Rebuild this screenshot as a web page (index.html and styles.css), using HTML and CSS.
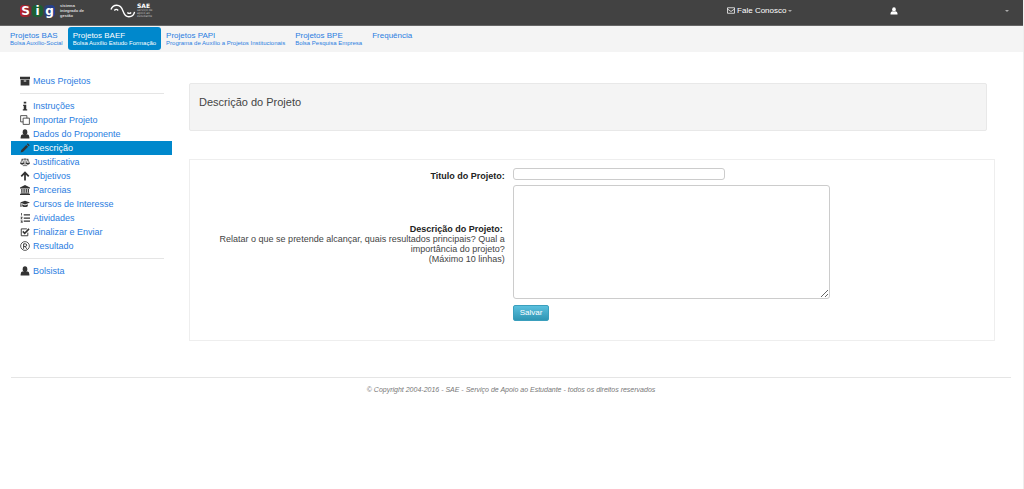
FILE: index.html
```html
<!DOCTYPE html>
<html lang="pt-BR">
<head>
<meta charset="utf-8">
<meta name="viewport" content="width=device-width, initial-scale=1">
<title>SAE - Descrição do Projeto</title>
<link rel="stylesheet" href="styles.css">
</head>
<body>
<svg class="sprite" aria-hidden="true">
  <symbol id="user" viewBox="0 0 16 16"><ellipse cx="8" cy="5" rx="3.700" ry="4.500"/><path d="M1 15v-2q0-4 4-4.500 3 2.500 6 0 4 .5 4 4.500v2z"/></symbol>
  <symbol id="archive" viewBox="0 0 16 16"><path d="M0 1h16v4H0zM1 6h14v9H1zM6 7.300v1.500h4V7.300z" fill-rule="evenodd"/></symbol>
  <symbol id="info" viewBox="0 0 16 16"><path d="M6 1h4v3H6zM5 6h5v7h1.500v2h-7v-2H6V8H5z"/></symbol>
  <symbol id="copy" viewBox="0 0 16 16"><path d="M5 5h10v10H5zM5 11H1V1h10v4" fill="none" stroke="currentColor" stroke-width="1.300"/></symbol>
  <symbol id="pencil" viewBox="0 0 16 16"><path d="M1 15l1-4 8-8 3 3-8 8zM11 2l1.500-1.500 3 3L14 5z"/></symbol>
  <symbol id="scale" viewBox="0 0 18 16"><path d="M9 1v13M5 14.500h8M3 3h12M4 3L1 10h6zM14 3l-3 7h6z" fill="none" stroke="currentColor" stroke-width="1.200"/><path d="M0 10h8q-1 3-4 3t-4-3zM10 10h8q-1 3-4 3t-4-3z"/></symbol>
  <symbol id="arrow" viewBox="0 0 16 16"><path d="M8 15V3M2 8.500l6-6 6 6" fill="none" stroke="currentColor" stroke-width="2.800"/></symbol>
  <symbol id="bank" viewBox="0 0 16 16"><path d="M8 0l8 4v1.500H0V4zM2 6.500h2V12H2zM5.500 6.500h2V12h-2zM9 6.500h2V12H9zM12.300 6.500h2V12h-2zM1 12.500h14V14H1zM0 14.500h16V16H0z"/></symbol>
  <symbol id="cap" viewBox="0 0 18 16"><path d="M9 2l9 3.500L9 9 0 5.500zM4 8.500l5 2 5-2V12q-5 3-10 0zM1 6h1.200l.8 7H.5z"/></symbol>
  <symbol id="list" viewBox="0 0 16 16"><path d="M6 2h10v2H6zM6 7h10v2H6zM6 12h10v2H6zM2 0h1.200v4H2zM1 6h3v1.200L2.500 9H4v1H1V9l1.500-1.800H1zM1 12h3v4H1v-1h1.800v-.6H1.500v-.8h1.300V13H1z"/></symbol>
  <symbol id="check" viewBox="0 0 16 16"><path d="M12.500 9v5H2V3h9" fill="none" stroke="currentColor" stroke-width="1.500"/><path d="M4.500 7l3 3.200L14.500 3" fill="none" stroke="currentColor" stroke-width="2.400"/></symbol>
  <symbol id="registered" viewBox="0 0 16 16"><circle cx="8" cy="8" r="7" fill="none" stroke="currentColor" stroke-width="1.300"/><path d="M5.800 12.500v-8h2.700q2.200 0 2.200 2.100T8.500 8.700H6M8.300 8.700l2.400 3.800" fill="none" stroke="currentColor" stroke-width="1.500"/></symbol>
  <symbol id="mail" viewBox="0 0 16 14"><path d="M1 1.500h14v11H1zM1 4l7 5 7-5" fill="none" stroke="currentColor" stroke-width="1.500"/></symbol>
</svg>

<header class="topbar">
  <a class="sig" href="#" aria-label="SIG - sistema integrado de gestão">
    <span class="sig-mark"><b class="red">S</b><b class="green">i</b><b class="blue">g</b></span>
    <span class="logo-text">sistema<br>integrado de<br>gestão</span>
  </a>
  <a class="sae" href="#">
    <svg class="wave" viewBox="0 0 27 14" aria-hidden="true"><path d="M1 5.500C2 2.500 4 1 7 1c4 0 5.500 3 6.500 6s2.500 6 6 6c3.500 0 5.500-2 6-5M4.500 6.500q2-2.500 4 0M18 8.500q2 2 4 0" fill="none" stroke="#fff" stroke-width="1.400"/></svg>
    <span class="sae-text"><b>SAE</b><small>serviço de<br>apoio ao<br>estudante</small></span>
  </a>
  <a class="contact" href="#"><svg class="mail"><use href="#mail"/></svg>Fale Conosco<i class="caret"></i></a>
  <a class="account" href="#" aria-label="Conta"><svg class="user"><use href="#user"/></svg><i class="caret"></i></a>
</header>

<nav class="tabs" aria-label="Projetos">
  <a href="#">Projetos BAS<small>Bolsa Auxílio-Social</small></a>
  <a class="active" href="#" aria-current="page">Projetos BAEF<small>Bolsa Auxílio Estudo Formação</small></a>
  <a href="#">Projetos PAPI<small>Programa de Auxílio a Projetos Institucionais</small></a>
  <a href="#">Projetos BPE<small>Bolsa Pesquisa Empresa</small></a>
  <a href="#">Frequência</a>
</nav>

<div class="page">
  <nav class="side" aria-label="Etapas">
    <a href="#"><svg><use href="#archive"/></svg>Meus Projetos</a>
    <hr>
    <a href="#"><svg><use href="#info"/></svg>Instruções</a>
    <a href="#"><svg><use href="#copy"/></svg>Importar Projeto</a>
    <a href="#"><svg><use href="#user"/></svg>Dados do Proponente</a>
    <a class="active" href="#" aria-current="page"><svg><use href="#pencil"/></svg>Descrição</a>
    <a href="#"><svg><use href="#scale"/></svg>Justificativa</a>
    <a href="#"><svg><use href="#arrow"/></svg>Objetivos</a>
    <a href="#"><svg><use href="#bank"/></svg>Parcerias</a>
    <a href="#"><svg><use href="#cap"/></svg>Cursos de Interesse</a>
    <a href="#"><svg><use href="#list"/></svg>Atividades</a>
    <a href="#"><svg><use href="#check"/></svg>Finalizar e Enviar</a>
    <a href="#"><svg><use href="#registered"/></svg>Resultado</a>
    <hr>
    <a href="#"><svg><use href="#user"/></svg>Bolsista</a>
  </nav>

  <main class="content">
    <h1 class="heading">Descrição do Projeto</h1>
    <form class="form">
      <label for="titulo"><b>Titulo do Projeto:</b></label>
      <input id="titulo" type="text">
      <label for="descricao"><b class="spaced">Descrição do Projeto:</b><br>Relatar o que se pretende alcançar, quais resultados principais? Qual a importância do projeto?<br>(Máximo 10 linhas)</label>
      <textarea id="descricao"></textarea>
      <button type="button">Salvar</button>
    </form>
  </main>
</div>

<footer class="footer">© Copyright 2004-2016 - SAE - Serviço de Apoio ao Estudante - todos os direitos reservados</footer>
</body>
</html>
```

FILE: styles.css
```css
* { box-sizing: border-box; }

body {
  margin: 0;
  min-height: 100vh;
  border-right: 1px solid #eee;
  background: #fff;
  color: #444;
  font: 9px/10px "Liberation Sans", Arial, sans-serif;
}

a { color: #2a7de1; text-decoration: none; }
svg { fill: currentColor; }
.sprite { display: none; }

/* Top bar */
.topbar {
  display: grid;
  grid-template-columns: 90px 1fr 16% 12%;
  align-items: center;
  height: 26px;
  padding: 0 14px 4px 20px;
  border-bottom: 1px solid #666;
  background: #424242;
  font-size: 8px;
}
.topbar a { display: flex; align-items: center; color: #fff; }
.sig { gap: 5px; }
.sig-mark { display: flex; gap: 1px; }
.sig-mark b {
  width: 11px;
  border-radius: 4px;
  font: bold 12px/12px "DejaVu Sans", sans-serif;
  text-align: center;
}
.red { background: linear-gradient(90deg, #c0202c, #7a2a30); }
.green { background: #1d5f33; }
.blue { background: linear-gradient(90deg, #33416a, #1f409c); }
.logo-text { color: #ddd; font: bold 4px/5px "Liberation Sans", sans-serif; }
.sae { gap: 1px; }
.wave { width: 26px; height: 14px; }
.sae-text b { display: block; font: bold 6px/6px "DejaVu Sans", sans-serif; }
.sae-text small { display: block; color: #bbb; font: 3px/3px "DejaVu Sans", sans-serif; }
.mail { width: 8px; height: 7px; margin-right: 2px; }
.user { width: 8px; height: 8px; }
.topbar .account { justify-content: space-between; }
.topbar .contact { margin-left: -5px; }
.caret {
  margin-left: 2px;
  border: 2px solid transparent;
  border-top-color: #aaa;
  border-bottom: 0;
}

/* Project tabs */
.tabs {
  display: flex;
  padding: 1px 5px 2px;
  background: #f4f4f4;
}
.tabs a {
  padding: 4px 5px;
  border-radius: 3px;
  font-size: 8px;
  line-height: 9px;
}
.tabs small { display: block; font-size: 6px; line-height: 6px; }
.tabs .active { background: #0088cc; color: #fff; }

/* Page body */
.page {
  display: grid;
  grid-template-columns: 161px 1fr;
  gap: 17px;
  padding: 22px 28px 0 11px;
}
.side a {
  display: flex;
  align-items: center;
  gap: 3px;
  padding-left: 9px;
  line-height: 14px;
}
.side svg { width: 10px; height: 10px; color: #333; }
.side .active { background: #0088cc; color: #fff; }
.side hr { margin: 5px 8px 5px 9px; border: 0; border-top: 1px solid #e5e5e5; }

.content { padding-top: 9px; }
.heading {
  min-height: 48px;
  margin: 0 8px 28px 0;
  padding: 11px 9px;
  border: 1px solid #e8e8e8;
  border-radius: 2px;
  background: #f4f4f4;
  font-size: 11px;
  font-weight: normal;
  line-height: 14px;
}
.form {
  display: grid;
  grid-template-columns: 39% 1fr;
  gap: 4px 8px;
  align-items: center;
  justify-items: start;
  padding: 7px 0 19px 2px;
  border: 1px solid #eee;
}
.form label { justify-self: end; max-width: 290px; padding-top: 4px; text-align: right; }
.form label b { color: #222; }
.spaced { margin-right: 2px; }
.form input,
.form textarea {
  margin: 0;
  padding: 1px 3px;
  border: 1px solid #ccc;
  border-radius: 3px;
  background: #fff;
  font: inherit;
}
.form input { width: 44%; height: 12px; }
.form textarea { width: 66%; height: 114px; }
.form button {
  grid-column: 2;
  margin-top: 2px;
  padding: 2px 6px;
  border: 1px solid #3a9fbd;
  border-radius: 2px;
  background: linear-gradient(#5bc0de, #2f96b4);
  color: #fff;
  font: 8px/10px "Liberation Sans", Arial, sans-serif;
}

.footer {
  margin: 36px 12px 0 11px;
  padding-top: 7px;
  border-top: 1px solid #e5e5e5;
  color: #777;
  font-size: 7px;
  font-style: italic;
  text-align: center;
}
```
